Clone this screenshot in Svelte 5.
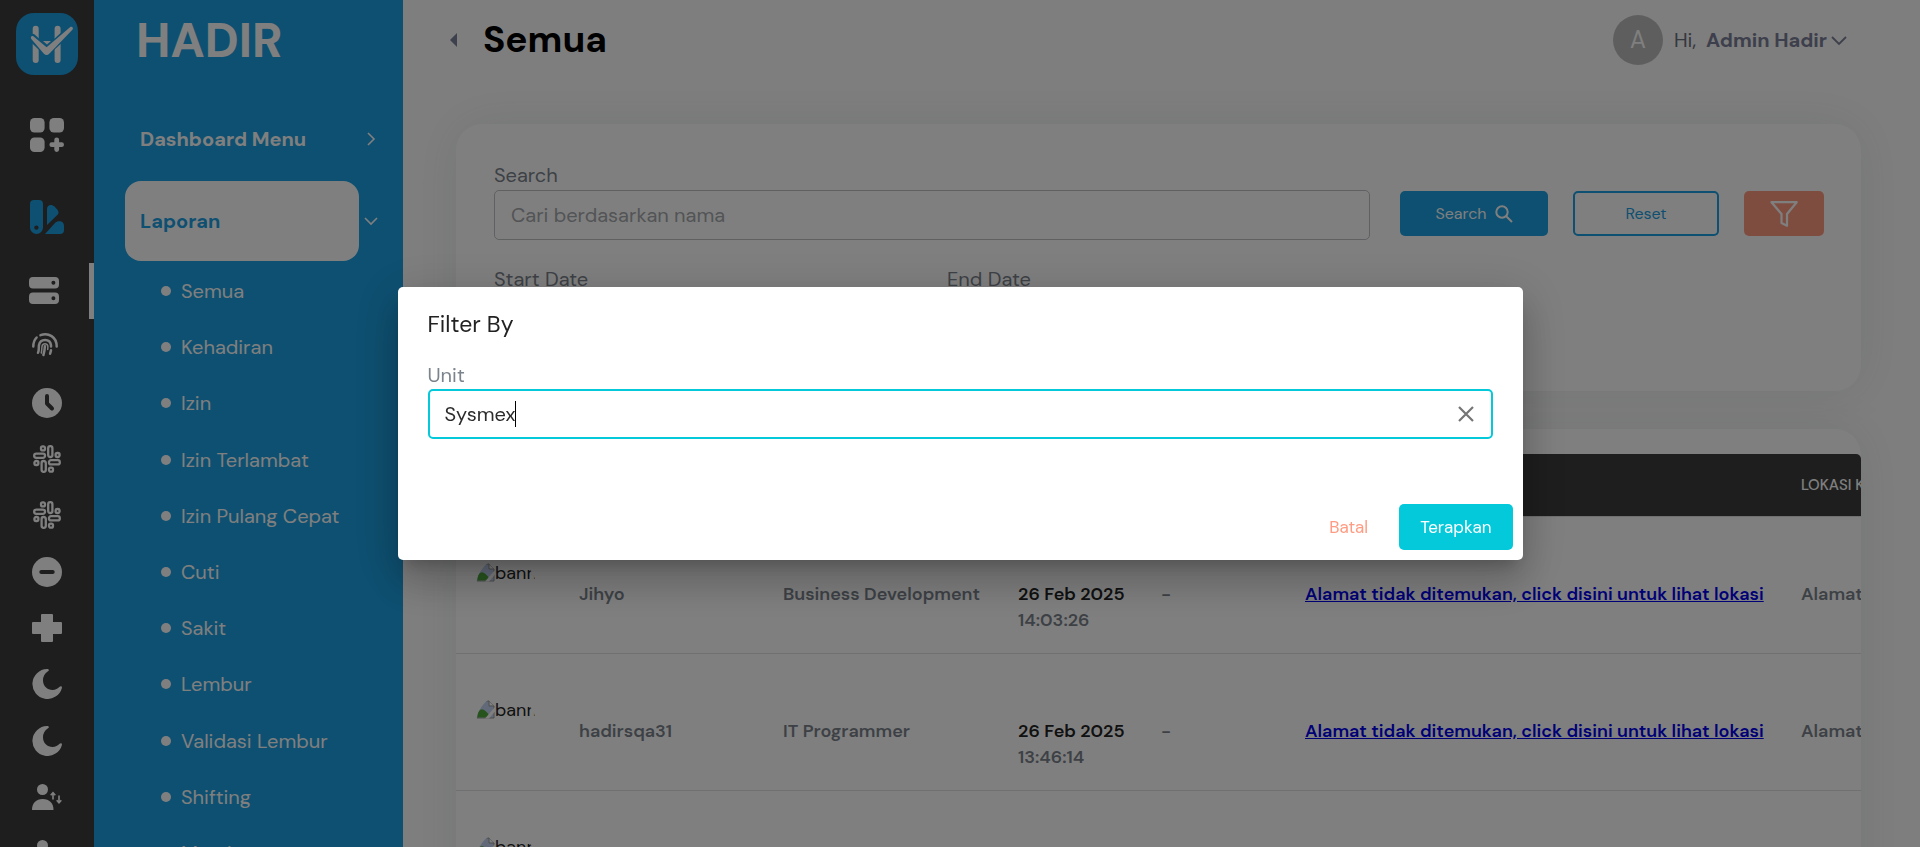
<script lang="ts">
  type Entry = { label: string; icon: string };

  const entries: Entry[] = [
    { label: 'Semua', icon: 'server' },
    { label: 'Kehadiran', icon: 'fingerprint' },
    { label: 'Izin', icon: 'clock' },
    { label: 'Izin Terlambat', icon: 'slack' },
    { label: 'Izin Pulang Cepat', icon: 'slack' },
    { label: 'Cuti', icon: 'minus' },
    { label: 'Sakit', icon: 'cross' },
    { label: 'Lembur', icon: 'moon' },
    { label: 'Validasi Lembur', icon: 'moon' },
    { label: 'Shifting', icon: 'shift' },
    { label: 'Member', icon: 'shift' }
  ];

  const rows = [
    { name: 'Jihyo', unit: 'Business Development', date: '26 Feb 2025', time: '14:03:26' },
    { name: 'hadirsqa31', unit: 'IT Programmer', date: '26 Feb 2025', time: '13:46:14' },
    { name: 'hadirsqa31', unit: 'IT Programmer', date: '26 Feb 2025', time: '13:40:02' }
  ];

  const missing = 'Alamat tidak ditemukan, click disini untuk lihat lokasi';

  let search = $state('');
  let unit = $state('Sysmex');
  let open = $state(true);
</script>

{#snippet railIcon(name: string)}
  {#if name === 'server'}
    <svg class="shift-left" width="30" height="28" viewBox="0 0 30 28" aria-hidden="true">
      <path fill="currentColor" fill-rule="evenodd" d="M4 0h22a4 4 0 0 1 4 4v3.500a4 4 0 0 1-4 4H4a4 4 0 0 1-4-4V4a4 4 0 0 1 4-4zm20.400 3.700a2 2 0 1 0 0 4 2 2 0 0 0 0-4zM4 15.500h22a4 4 0 0 1 4 4V23a4 4 0 0 1-4 4H4a4 4 0 0 1-4-4v-3.500a4 4 0 0 1 4-4zm20.400 3.700a2 2 0 1 0 0 4 2 2 0 0 0 0-4z" />
    </svg>
  {:else if name === 'fingerprint'}
    <svg class="shift-left" width="26" height="30" viewBox="0 0 26 30" fill="none" stroke="currentColor" stroke-width="2.500" stroke-linecap="round" aria-hidden="true">
      <path d="M1.300 14.500c0-3.800 1.200-6.800 3.300-9" />
      <path d="M8.500 3.200C16.500.2 24.700 5 24.700 14.500" />
      <path d="M6 20.800c1.300-2.700.5-5.300 1-7.800C8.300 6.300 18 6.300 19 13.200v1.300" />
      <path d="M10 8.800" />
      <path d="M12.900 14.200c-.2 3.600-.6 6-1.500 8.800M19 18.200c-.2 1.200-.5 2.300-.9 3.500" />
      <path d="M9.300 21c.6-2.500.4-5 .8-7 .7-3 5-3 5.700 0 .2 1.500 0 2.500-.1 3.500" stroke-width="1.500" />
    </svg>
  {:else if name === 'clock'}
    <svg width="30" height="30" viewBox="0 0 30 30" aria-hidden="true">
      <circle cx="15" cy="15" r="15" fill="currentColor" />
      <path d="M15 8v7.500l5 5" fill="none" stroke="#3c3c3c" stroke-width="4" stroke-linecap="round" stroke-linejoin="round" />
    </svg>
  {:else if name === 'slack'}
    <svg width="28" height="30" viewBox="-14 -14 28 30" fill="none" stroke="currentColor" stroke-width="2.300" aria-hidden="true">
      {#each [0, 90, 180, 270] as turn}
        <g transform="rotate({turn})">
          <rect x="1.200" y="-12.800" width="4.200" height="10.800" rx="2" />
          <rect x="-6" y="-12.600" width="4" height="4" rx="1.700" />
        </g>
      {/each}
    </svg>
  {:else if name === 'minus'}
    <svg width="30" height="30" viewBox="0 0 30 30" aria-hidden="true">
      <circle cx="15" cy="15" r="15" fill="currentColor" />
      <path d="M9.300 15h11.400" stroke="#3c3c3c" stroke-width="4" stroke-linecap="round" />
    </svg>
  {:else if name === 'cross'}
    <svg width="30" height="28" viewBox="0 0 30 28" fill="currentColor" aria-hidden="true">
      <path d="M10 0h10a1 1 0 0 1 1 1v7h8a1 1 0 0 1 1 1v10a1 1 0 0 1-1 1h-8v7a1 1 0 0 1-1 1H10a1 1 0 0 1-1-1v-7H1a1 1 0 0 1-1-1V9a1 1 0 0 1 1-1h8V1a1 1 0 0 1 1-1z" />
    </svg>
  {:else if name === 'moon'}
    <svg width="30" height="30" viewBox="0 0 30 30" fill="currentColor" aria-hidden="true">
      <path d="M15 0c1.800 0 2.600 1.300 1 2.300A10.800 10.800 0 0 0 11 11.500c0 5.400 4.300 9.500 9.600 9.500 2.900 0 5.200-1.300 7-3.200 1.200-1.200 2.600-.4 2.300 1.100A15 15 0 1 1 15 0z" />
    </svg>
  {:else}
    <svg width="30" height="26" viewBox="0 0 30 26" fill="currentColor" aria-hidden="true">
      <circle cx="10.500" cy="5.500" r="5.500" />
      <path d="M0 26C0 19 4 15 10.700 15S21.500 19 21.500 26z" />
      <path d="M21 15.500V9m-2.300 2.300L21 8.800l2.300 2.500M27 11.500V18.500m-2.300-2.300 2.300 2.500 2.300-2.500" fill="none" stroke="currentColor" stroke-width="1.600" />
    </svg>
  {/if}
{/snippet}

<div class="app">
  <nav class="rail" aria-label="Pintasan">
    <a class="rail-head" href="#beranda" aria-label="Hadir">
      <svg width="62" height="62" viewBox="0 0 62 62" aria-hidden="true">
        <rect width="62" height="62" rx="18" fill="#1ca0e2" />
        <g stroke="#fff" stroke-width="6" stroke-linecap="round" fill="none">
          <path d="M19.700 15.700v31.300M41.600 15.700v31.300" />
        </g>
        <path d="M27 28h8l-4 3.500z" fill="#fff" />
        <path d="M16.500 25 30.500 38.500 55.500 15.500" fill="none" stroke="#1ca0e2" stroke-width="8" stroke-linecap="round" stroke-linejoin="round" />
        <path d="M17.600 23.500 30.600 34.200 54 14.200c2-1.400 3.800.7 2.400 2.500L33.500 40.500c-2 2-3.800 2-5.800 0L15.300 26c-1.300-2 .5-3.700 2.300-2.500z" fill="#fff" />
      </svg>
    </a>
    <a class="rail-top" href="#dashboard" aria-label="Dashboard Menu">
      <svg width="34" height="34" viewBox="0 0 34 34" fill="currentColor" aria-hidden="true">
        <rect width="14.600" height="14.600" rx="4.500" />
        <rect x="19.400" width="14.600" height="14.600" rx="4.500" />
        <rect y="19.400" width="14.600" height="14.600" rx="4.500" />
        <path d="M26.700 21.800v9.800M21.800 26.700h9.800" stroke="currentColor" stroke-width="4.800" stroke-linecap="round" />
      </svg>
    </a>
    <a class="rail-top active" href="#laporan" aria-label="Laporan">
      <svg width="34" height="34" viewBox="0 0 34 34" fill="currentColor" aria-hidden="true">
        <path fill-rule="evenodd" d="M4 0h5a4 4 0 0 1 4 4v23.500a6.500 6.500 0 0 1-13 0V4a4 4 0 0 1 4-4zm2.400 25.400a2.200 2.200 0 1 0 0 4.400 2.200 2.200 0 0 0 0-4.400z" />
        <path d="M17 25V9c0-4 4.500-5.500 7.500-2.500L27 9.200c2 2 2 4.300 0 6.100z" />
        <path d="M15 34 25 23c2-2.200 9-3 9 3v4a4 4 0 0 1-4 4z" />
      </svg>
    </a>
    <ul class="entries">
      {#each entries as entry, i}
        <li class:current={i === 0}>
          <a href="#laporan-{i}" aria-label={entry.label}>{@render railIcon(entry.icon)}</a>
        </li>
      {/each}
    </ul>
  </nav>

  <nav class="sidebar" aria-label="Menu">
    <a class="wordmark" href="#beranda">HADIR</a>
    <a class="group" href="#dashboard">
      <span class="group-label">Dashboard Menu</span>
      <svg width="24" height="24" viewBox="0 0 24 24" fill="none" stroke="currentColor" stroke-width="1.600" aria-hidden="true"><path d="m9 6 6 6-6 6" /></svg>
    </a>
    <a class="group open" href="#laporan">
      <span class="group-label">Laporan</span>
      <svg width="24" height="24" viewBox="0 0 24 24" fill="none" stroke="currentColor" stroke-width="1.600" aria-hidden="true"><path d="m6 9 6 6 6-6" /></svg>
    </a>
    <ul class="entries">
      {#each entries as entry, i}
        <li><a class="entry" href="#laporan-{i}">{entry.label}</a></li>
      {/each}
    </ul>
  </nav>

  <main>
    <header>
      <button class="back" aria-label="Kembali">
        <svg width="8" height="14" viewBox="0 0 8 14" aria-hidden="true"><path d="M8 0v14L1 7z" fill="currentColor" /></svg>
      </button>
      <h1>Semua</h1>
      <button class="account">
        <span class="initial">A</span>
        <span class="hi">Hi,</span>
        <b>Admin Hadir</b>
        <svg width="16" height="16" viewBox="0 0 16 16" fill="none" stroke="currentColor" stroke-width="1.800" aria-hidden="true"><path d="m1 5 7 7 7-7" /></svg>
      </button>
    </header>

    <section class="card filters">
      <form class="search-row" onsubmit={(e) => e.preventDefault()}>
        <div class="field grow">
          <label for="search">Search</label>
          <input id="search" type="text" placeholder="Cari berdasarkan nama" bind:value={search} />
        </div>
        <div class="buttons">
          <button class="btn search" type="submit">
            Search
            <svg width="18" height="18" viewBox="0 0 18 18" fill="none" stroke="currentColor" stroke-width="2" aria-hidden="true"><circle cx="7" cy="7" r="5.700" /><path d="m11 11 6 6" /></svg>
          </button>
          <button class="btn reset" type="button">Reset</button>
          <button class="btn funnel" type="button" aria-label="Filter" onclick={() => (open = true)}>
            <svg width="28" height="26" viewBox="0 0 28 26" fill="none" stroke="currentColor" stroke-width="2.200" stroke-linejoin="round" aria-hidden="true"><path d="M1.500 1.200h25.200L17 13v11.800l-5.500-2.700V13z" /></svg>
          </button>
        </div>
      </form>
      <div class="dates">
        <div class="field">
          <label for="start">Start Date</label>
          <input id="start" type="text" />
        </div>
        <div class="field">
          <label for="end">End Date</label>
          <input id="end" type="text" />
        </div>
      </div>
    </section>

    <section class="card records">
      <div class="scroller">
        <table>
          <colgroup>
            <col class="c-photo" /><col class="c-name" /><col class="c-unit" /><col class="c-in" /><col class="c-out" /><col class="c-place" /><col class="c-place" />
          </colgroup>
          <thead>
            <tr>
              <th scope="col">FOTO</th>
              <th scope="col">NAMA</th>
              <th scope="col">UNIT</th>
              <th scope="col">MASUK</th>
              <th scope="col">KELUAR</th>
              <th scope="col">LOKASI MASUK</th>
              <th scope="col">LOKASI KELUAR</th>
            </tr>
          </thead>
          <tbody>
            {#each rows as row}
              <tr>
                <td class="photo">
                  <div class="picture">
                    <svg width="19" height="19" viewBox="0 0 19 19" aria-hidden="true">
                      <path d="M1 1h12l5 5v12H1z" fill="#c5d5f5" stroke="#9a9a9a" />
                      <path d="M1.500 17.500V12q4-5 8-1l3 3v3.500z" fill="#4fa83a" />
                      <path d="M13 1v5h5" fill="#fff" stroke="#9a9a9a" />
                      <path d="M19 7 9 18.500h4l6-7z" fill="#fff" />
                    </svg>
                    <span>banner</span>
                  </div>
                </td>
                <td>{row.name}</td>
                <td>{row.unit}</td>
                <td><span class="date">{row.date}</span><br />{row.time}</td>
                <td>-</td>
                <td><a href="#lokasi">{missing}</a></td>
                <td>{missing}</td>
              </tr>
            {/each}
          </tbody>
        </table>
      </div>
    </section>
  </main>
</div>

{#if open}
  <div class="backdrop">
    <div class="dialog" role="dialog" aria-modal="true" aria-labelledby="dialog-title">
      <h2 id="dialog-title">Filter By</h2>
      <div class="dialog-body">
        <label for="unit">Unit</label>
        <div class="combo">
          <input id="unit" type="text" size="6" bind:value={unit} />
          <span class="caret"></span>
          <button class="clear" aria-label="Hapus" onclick={() => (unit = '')}>
            <svg width="16" height="16" viewBox="0 0 16 16" fill="none" stroke="currentColor" stroke-width="2.200" aria-hidden="true"><path d="m1 1 14 14M15 1 1 15" /></svg>
          </button>
        </div>
      </div>
      <div class="actions">
        <button class="cancel" onclick={() => (open = false)}>Batal</button>
        <button class="apply" onclick={() => (open = false)}>Terapkan</button>
      </div>
    </div>
  </div>
{/if}

<style>
  :global(body) {
    margin: 0;
    overflow: hidden;
    font-family: 'DM Sans', Inter, 'Open Sans', sans-serif;
    font-size: 20px;
    line-height: 26px;
    color: #7b838c;
    background: #fdfdfd;
  }
  :global(*) { box-sizing: border-box; }
  button, input { font: inherit; color: inherit; }
  button { border: 0; background: none; padding: 0; cursor: pointer; }
  a { color: inherit; text-decoration: none; }
  ul { list-style: none; margin: 0; padding: 0; }
  svg { display: block; flex: none; }

  .app { display: flex; height: 100vh; overflow: hidden; }

  .rail { flex: none; width: 94px; background: #3c3c3c; color: #fff; }
  .rail a { display: flex; align-items: center; justify-content: center; }
  .rail-head { height: 88px; margin-bottom: 6px; }
  .rail-top { height: 82px; }
  .rail-top.active { color: #1ca0e2; margin-bottom: 5px; }
  .entries { display: grid; grid-template-rows: repeat(11, 1fr); height: 618px; }
  .rail li { display: grid; }
  .rail li.current { border-right: 5px solid #fff; }
  .rail .shift-left { margin-right: 4px; }
  .rail .current .shift-left { margin-right: 2px; }

  .sidebar { flex: none; width: 309px; background: #1ca0e2; color: #fff; }
  .wordmark { display: flex; align-items: center; height: 82px; margin-bottom: 16px; padding-left: 42px; font-size: 48px; line-height: 48px; font-weight: 800; }
  .group { display: flex; align-items: center; height: 82px; padding-left: 31px; font-weight: 700; }
  .group-label { display: flex; align-items: center; width: 234px; height: 80px; padding: 0 15px; border-radius: 16px; }
  .group.open { margin-bottom: 1px; }
  .group.open .group-label { background: #fff; color: #1ca0e2; }
  .entry { display: flex; align-items: center; gap: 10px; height: 100%; padding-left: 67px; }
  .entry::before { content: ''; width: 10px; height: 10px; border-radius: 50%; background: currentColor; }

  main { flex: 1; min-width: 0; padding-right: 59px; }
  header { display: flex; align-items: center; height: 80px; margin-bottom: 44px; padding: 0 14px 0 46px; }
  h1 { margin: 0 auto 2px 26px; font-size: 37px; line-height: 44px; font-weight: 700; color: #000; }
  .back { color: #7b809a; }
  .account { display: flex; align-items: center; color: #7b8098; }
  .initial { display: grid; place-items: center; width: 50px; height: 50px; margin-right: 11px; border-radius: 50%; background: #bdbdbd; color: #fff; font-size: 24px; }
  .hi { margin-right: 10px; color: #6a707c; }
  .account b { margin-right: 4px; }

  .card { margin-left: 53px; border-radius: 26px; background: #fff; box-shadow: 0 0 50px rgba(0, 50, 35, 0.09); }
  .filters { height: 267px; margin-bottom: 38px; padding: 38px 37px 0 38px; }
  .field { display: flex; flex-direction: column; gap: 2px; }
  .field input { width: 100%; height: 50px; padding: 0 16px; border: 1px solid #bfc1c4; border-radius: 5px; background: transparent; outline: none; }
  .field input::placeholder { color: #a6a9ad; opacity: 1; }
  .grow { flex: 1; }
  .search-row { display: flex; align-items: flex-end; gap: 30px; margin-bottom: 26px; }
  .buttons { display: flex; gap: 25px; margin-bottom: 4px; }
  .btn { display: flex; align-items: center; justify-content: center; gap: 8px; height: 45px; border-radius: 5px; font-size: 16px; }
  .search { width: 148px; background: #1ca0e2; color: #fff; }
  .reset { width: 146px; border: 2px solid #1ca0e2; color: #1ca0e2; }
  .funnel { width: 80px; background: #ff9b80; color: #fff; }
  .dates { display: flex; gap: 30px; }
  .dates .field { width: 423px; }

  .records { padding-top: 25px; }
  .scroller { overflow: hidden; border-radius: 5px 5px 0 0; }
  table { table-layout: fixed; width: 1821px; border-collapse: separate; border-spacing: 0; }
  .c-photo { width: 103px; }
  .c-name { width: 204px; }
  .c-unit { width: 235px; }
  .c-in { width: 143px; }
  .c-out { width: 144px; }
  .c-place { width: 496px; }
  th { height: 63px; padding: 0 20px; border-bottom: 1px solid #dfe0e2; background: #3c3c3c; background-clip: padding-box; color: #fff; font-size: 15px; font-weight: 500; text-align: left; white-space: nowrap; }
  td { height: 137px; padding: 64px 20px 0; border-bottom: 1px solid #dfe0e2; vertical-align: top; font-size: 18px; font-weight: 600; white-space: nowrap; }
  td.photo { padding-top: 40px; }
  td a { color: #0000ee; text-decoration: underline; }
  .date { color: #222; }
  .picture { display: flex; width: 60px; height: 60px; padding-top: 6px; overflow: hidden; border-radius: 50%; color: #222; font-size: 18px; line-height: 20px; font-weight: 400; }

  .backdrop { position: fixed; inset: 0; display: grid; place-items: center; background: rgba(0, 0, 0, 0.5); }
  .dialog { width: 1125px; max-width: 90vw; border-radius: 5px; background: #fff; box-shadow: 0 11px 15px -7px rgba(0, 0, 0, 0.2), 0 24px 38px 3px rgba(0, 0, 0, 0.14), 0 9px 46px 8px rgba(0, 0, 0, 0.12); }
  h2 { margin: 0; padding: 21px 30px 19px; font-size: 23px; line-height: 32px; font-weight: 400; color: #222; }
  .dialog-body { padding: 3px 30px 55px; }
  .dialog-body label { display: block; margin-bottom: 1px; }
  .combo { display: flex; align-items: center; height: 50px; padding: 0 17px 0 15px; border: 2px solid #04c9da; border-radius: 5px; color: #2c2c2c; }
  .combo input { field-sizing: content; padding: 0; border: 0; outline: 0; background: none; caret-color: transparent; }
  .caret { width: 1px; height: 26px; background: #000; }
  .clear { margin-left: auto; color: #757575; }
  .actions { display: flex; justify-content: flex-end; align-items: center; gap: 10px; padding: 10px; font-size: 17px; }
  .actions button { height: 46px; padding: 0 21px; border-radius: 5px; }
  .cancel { color: #ff9b80; }
  .apply { background: #04c9da; color: #fff; }
</style>
